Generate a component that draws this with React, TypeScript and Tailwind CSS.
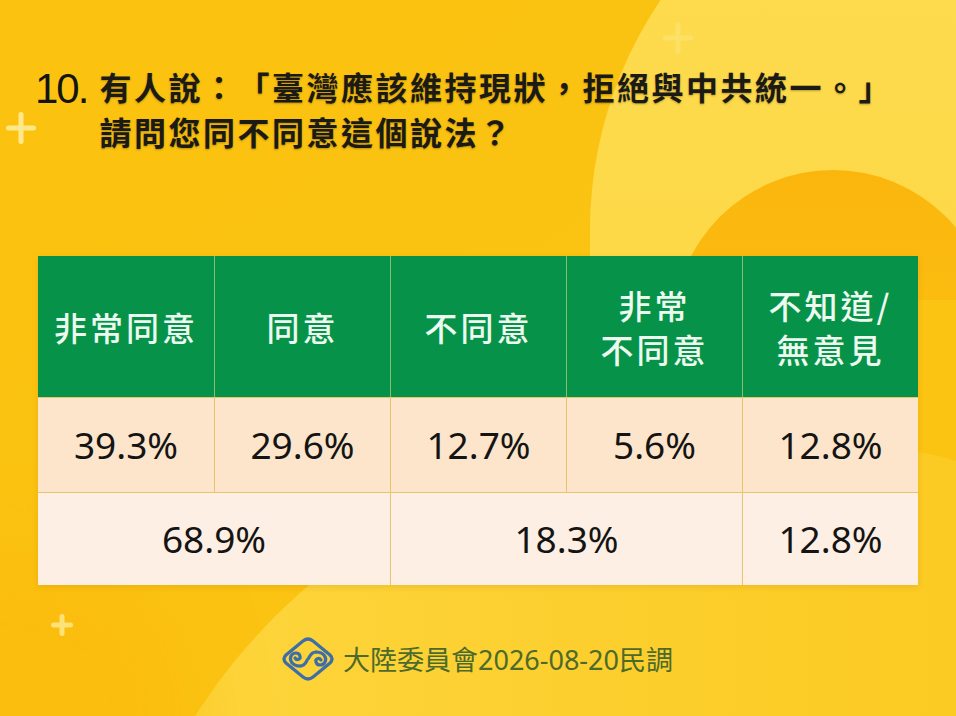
import React from "react";

const headers: string[][] = [["非常同意"], ["同意"], ["不同意"], ["非常", "不同意"], ["不知道/", "無意見"]];
const values = ["39.3%", "29.6%", "12.7%", "5.6%", "12.8%"];

function Plus({ className }: { className: string }) {
  return (
    <div className={`absolute ${className}`}>
      <div className="absolute left-1/2 top-0 h-full w-[5px] -translate-x-1/2 rounded-full bg-current" />
      <div className="absolute top-1/2 left-0 w-full h-[5px] -translate-y-1/2 rounded-full bg-current" />
    </div>
  );
}

function Logo() {
  return (
    <svg width="54" height="46" viewBox="0 0 54 46" fill="none" stroke="#3d6fa6" strokeWidth="3.2" strokeLinecap="round">
      <path d="M22 5 Q27 1 32 5 L49 19 Q53 23 49 27 L32 41 Q27 45 22 41 L5 27 Q1 23 5 19 Z" />
      <path d="M19 30 C11 30 8 24 10 20 C12 16 18 16 19 20 C20 23 16 25 14 22" />
      <path d="M35 16 C43 16 46 22 44 26 C42 30 36 30 35 26 C34 23 38 21 40 24" />
      <path d="M19 30 C25 30 26 23 27 23 C28 23 29 16 35 16" />
    </svg>
  );
}

export default function App() {
  return (
    <div
      className="relative w-[956px] h-[716px] overflow-hidden bg-gradient-to-br from-[#fbc30f] to-[#fbc314]"
      style={{ fontFamily: '"Noto Sans", "Noto Sans CJK TC", sans-serif' }}
    >
      {/* background shapes */}
      <div className="absolute left-[590px] top-[-180px] w-[820px] h-[900px] rounded-full bg-gradient-to-b from-[#fddc50] to-[#fdd63e]" />
      <div className="absolute left-[673px] top-[170px] w-[320px] h-[320px] rounded-full bg-gradient-to-b from-[#fbb60e] via-[#fbbd10] to-[#fbc413]" />
      <div className="absolute left-[880px] top-[300px] w-[200px] h-[440px] bg-[#fbc413]" />
      <div className="absolute left-[100px] top-[440px] w-[1300px] h-[1200px] rounded-full bg-gradient-to-r from-[#fdd63e] via-[#fccd28] to-[#fbc413]" />
      <div className="absolute left-[-200px] top-[560px] w-[380px] h-[300px] rounded-full bg-[#fbbd0e] blur-2xl" />
      <Plus className="left-[663px] top-[22px] w-[30px] h-[32px] text-[#fde066]" />
      <Plus className="left-[6px] top-[112px] w-[30px] h-[32px] text-[#fde98c]" />
      <Plus className="left-[51px] top-[614px] w-[22px] h-[22px] text-[#fde277]" />

      <div className="relative flex flex-col h-full">
        <div className="flex items-start pl-[35px] pt-[66px]">
          <span
            className="text-[42px] leading-[42px] text-[#141414] tracking-[-2px] mt-[2px]"
            style={{ fontFamily: '"Liberation Sans", sans-serif' }}
          >
            10.
          </span>
          <div
            className="ml-[12px] text-[32px] leading-[45px] font-bold text-[#1c1a14] tracking-[2.5px] [text-spacing-trim:space-all] [text-shadow:0_1px_2px_rgba(60,40,0,0.35)]"
            style={{ fontFamily: '"Noto Sans CJK TC", sans-serif' }}
          >
            <div className="-mt-[2px]">有人說：「臺灣應該維持現狀，拒絕與中共統一。」</div>
            <div>請問您同不同意這個說法？</div>
          </div>
        </div>

        <div className="mt-[102px] ml-[38px] w-[880px] grid grid-cols-5 shadow-[0_2px_6px_rgba(150,90,0,0.15)]">
          {headers.map((h, i) => (
            <div
              key={i}
              className={`h-[141px] bg-[#069349] flex flex-col items-center justify-center text-[33px] font-medium leading-[44px] tracking-[3px] text-[#ecfaf0] ${i > 0 ? "border-l border-[#7cc36a]" : ""}`}
              style={{ fontFamily: '"Noto Sans CJK TC", sans-serif' }}
            >
              {h.map((line) => (
                <div key={line}>{line}</div>
              ))}
            </div>
          ))}
          {values.map((v, i) => (
            <div
              key={v + i}
              className={`h-[95px] bg-[#fce5cb] border-t border-[#e9c46c] flex items-center justify-center text-[37px] text-[#141414] ${i > 0 ? "border-l" : ""}`}
            >
              {v}
            </div>
          ))}
          <div className="col-span-2 h-[93px] bg-[#fdefe3] border-t border-[#e9c46c] flex items-center justify-center text-[37px] text-[#141414]">
            68.9%
          </div>
          <div className="col-span-2 h-[93px] bg-[#fdefe3] border-t border-l border-[#e9c46c] flex items-center justify-center text-[37px] text-[#141414]">
            18.3%
          </div>
          <div className="h-[93px] bg-[#fdefe3] border-t border-l border-[#e9c46c] flex items-center justify-center text-[37px] text-[#141414]">
            12.8%
          </div>
        </div>

        <div className="mt-[51px] ml-[281px] flex items-center gap-[8px]">
          <Logo />
          <span
            className="text-[27px] text-[#4b6a2c] leading-none"
            style={{ fontFamily: '"Noto Sans", "Noto Sans CJK TC", sans-serif' }}
          >
            大陸委員會2026-08-20民調
          </span>
        </div>
      </div>
    </div>
  );
}
